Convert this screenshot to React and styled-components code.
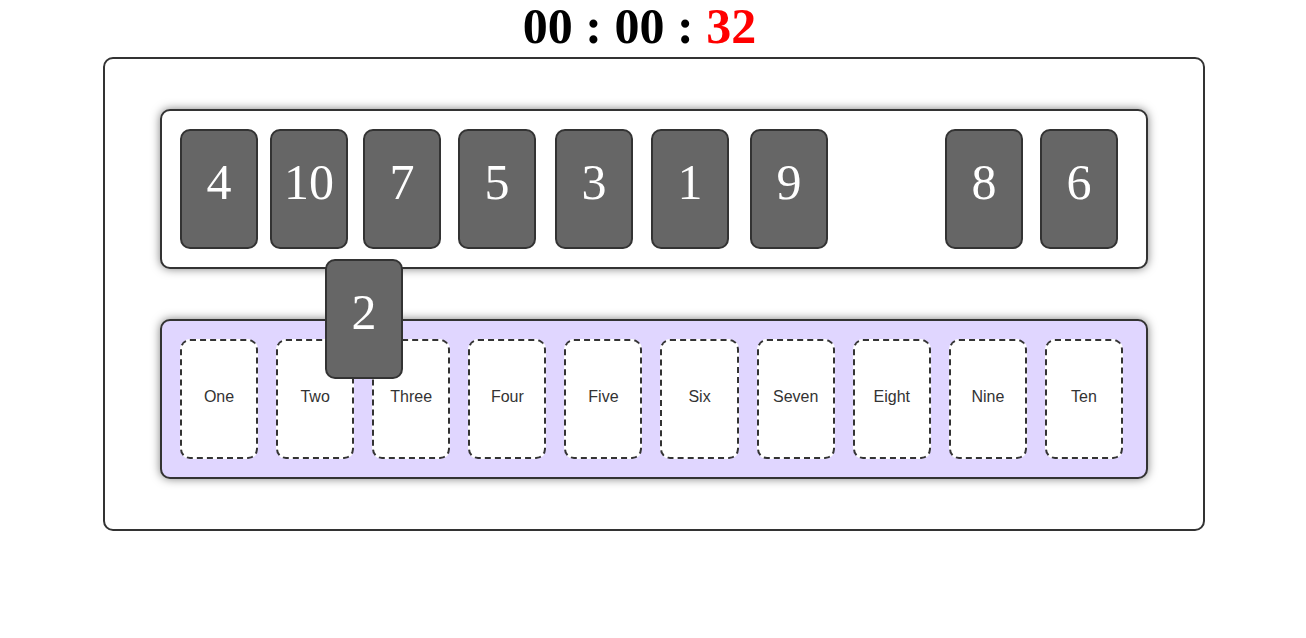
import React from 'react';
import styled, { createGlobalStyle } from 'styled-components';

const GlobalStyle = createGlobalStyle`
  *, *::before, *::after { box-sizing: border-box; }
  body { margin: 0; background: #fff; }
`;

const Timer = styled.h1`
  margin: 0;
  padding: 0 27px 5px 0;
  font: bold 50px/52px "Liberation Serif", serif;
  text-align: center;
  color: #000;
`;

const Seconds = styled.span`
  color: #f00;
`;

const Board = styled.main`
  display: flex;
  flex-direction: column;
  gap: 50px;
  margin: 0 101px 0 103px;
  padding: 50px 55px;
  border: 2px solid #333;
  border-radius: 10px;
`;

const Panel = styled.section`
  position: relative;
  display: grid;
  border: 2px solid #333;
  border-radius: 10px;
  box-shadow: 0 0 10px rgba(0, 0, 0, 0.5);
`;

const Pile = styled(Panel)`
  z-index: 1;
  grid-template-columns: 90fr 93fr 95fr 97fr 96fr 99fr 98fr 97fr 95fr 88fr;
  padding: 18px;
  background: #fff;
`;

const Slots = styled(Panel)`
  grid-template-columns: repeat(10, minmax(0, 1fr));
  gap: 18px;
  padding: 18px 23px 18px 18px;
  background: #e0d6ff;
`;

const Card = styled.div`
  width: 78px;
  height: 120px;
  border: 2px solid #333;
  border-radius: 10px;
  background: #666;
  color: #fff;
  font: 50px/102px "Liberation Serif", serif;
  text-align: center;
  cursor: move;
`;

const DraggedCard = styled(Card)`
  position: absolute;
  top: 148px;
  left: 163px;
`;

const Slot = styled.div`
  height: 120px;
  border: 2px dashed #333;
  border-radius: 10px;
  background: #fff;
  color: #333;
  font: 16px/112px "Liberation Sans", Arial, sans-serif;
  text-align: center;
`;

const pile = [4, 10, 7, 5, 3, 1, 9, null, 8, 6];
const slots = ['One', 'Two', 'Three', 'Four', 'Five', 'Six', 'Seven', 'Eight', 'Nine', 'Ten'];

export default function App() {
  return (
    <>
      <GlobalStyle />
      <Timer>
        00 : 00 : <Seconds>32</Seconds>
      </Timer>
      <Board>
        <Pile aria-label="Cards">
          {pile.map((n) => (n === null ? <span key="empty" /> : <Card key={n} draggable>{n}</Card>))}
          <DraggedCard draggable>2</DraggedCard>
        </Pile>
        <Slots aria-label="Slots">
          {slots.map((name) => (
            <Slot key={name}>{name}</Slot>
          ))}
        </Slots>
      </Board>
    </>
  );
}
